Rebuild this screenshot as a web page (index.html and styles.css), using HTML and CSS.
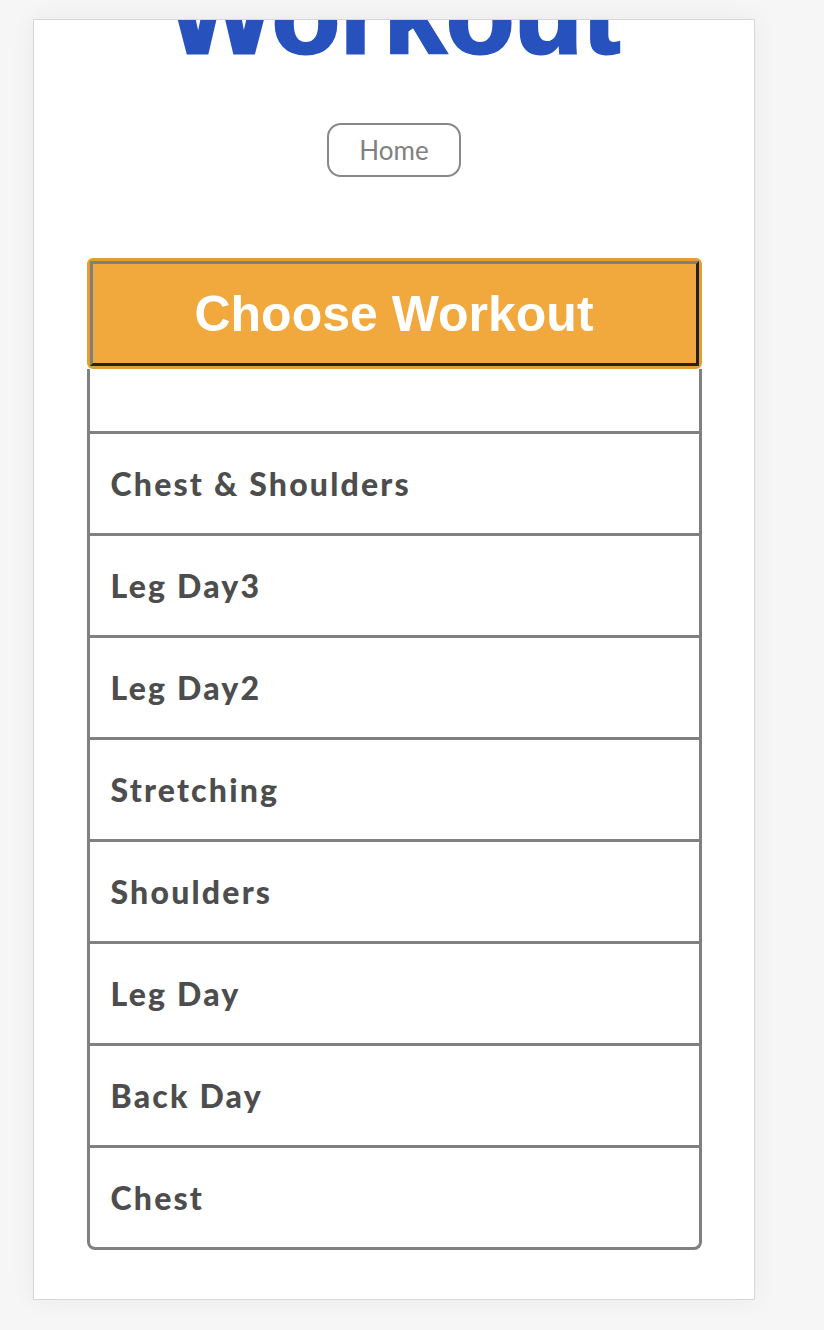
FILE: index.html
```html
<!DOCTYPE html>
<html>
<head>
<meta charset="utf-8">
<link rel="stylesheet" href="styles.css">
</head>
<body>
<main class="card">
  <h1 class="title">Workout</h1>
  <div class="nav"><a class="home-btn">Home</a></div>
  <section class="dropdown">
    <div class="dropdown-head"><button class="dropdown-btn">Choose Workout</button></div>
    <ul class="workout-list">
      <li class="workout-item empty"></li>
      <li class="workout-item">Chest &amp; Shoulders</li>
      <li class="workout-item">Leg Day3</li>
      <li class="workout-item">Leg Day2</li>
      <li class="workout-item">Stretching</li>
      <li class="workout-item">Shoulders</li>
      <li class="workout-item">Leg Day</li>
      <li class="workout-item">Back Day</li>
      <li class="workout-item">Chest</li>
    </ul>
  </section>
</main>
</body>
</html>
```
FILE: styles.css
```css
html, body {
  margin: 0;
  padding: 0;
  background: #f6f6f6;
}
body {
  padding: 19px 0 30px 33px;
  font-family: "Lato", "Liberation Sans", sans-serif;
}
.card {
  width: 720px;
  background: #ffffff;
  border: 1px solid #d6d6d6;
  box-shadow: 0 0 24px rgba(0, 0, 0, 0.06);
  overflow: hidden;
  padding-bottom: 49px;
  display: flex;
  flex-direction: column;
  align-items: center;
}
.title {
  margin: -61px 0 0 0;
  font-family: "Liberation Sans", Arial, sans-serif;
  font-weight: 700;
  font-size: 112px;
  line-height: 112px;
  color: #2752be;
  text-align: center;
  -webkit-text-stroke: 3px #2752be;
}
.nav {
  margin-top: 52px;
  display: flex;
  justify-content: center;
}
.home-btn {
  box-sizing: border-box;
  width: 134px;
  height: 54px;
  border: 2px solid #888888;
  border-radius: 14px;
  display: flex;
  align-items: center;
  justify-content: center;
  font-size: 26px;
  color: #808080;
}
.dropdown {
  margin-top: 81px;
  width: 615px;
  display: flex;
  flex-direction: column;
}
.dropdown-head {
  border: 3px solid #e49c35;
  border-radius: 6px;
  background: #f1a83c;
}
.dropdown-btn {
  display: block;
  box-sizing: border-box;
  width: 100%;
  height: 105px;
  margin: 0;
  padding: 0;
  background: #f1a83c;
  border-style: solid;
  border-width: 3px;
  border-color: #7f7f7f #222222 #222222 #7f7f7f;
  font-family: "Liberation Sans", Arial, sans-serif;
  font-weight: 700;
  font-size: 50px;
  color: #ffffff;
  text-align: center;
}
.workout-list {
  list-style: none;
  margin: 0;
  padding: 0;
  border: 3px solid #808080;
  border-top: none;
  border-radius: 0 0 8px 8px;
}
.workout-item {
  box-sizing: border-box;
  height: 102px;
  border-top: 3px solid #808080;
  padding: 0 0 0 21px;
  display: flex;
  align-items: center;
  font-weight: 900;
  font-size: 32px;
  letter-spacing: 2.2px;
  color: #4d4d4d;
}
.workout-item.empty {
  height: 62px;
  border-top: none;
}
```
